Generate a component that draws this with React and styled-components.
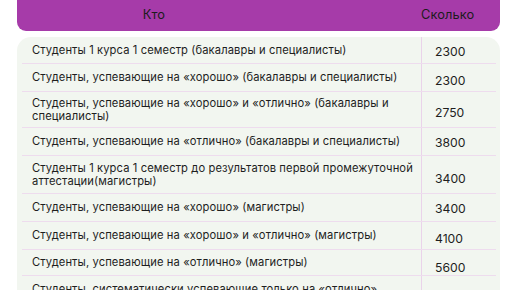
import React from 'react';
import styled, { createGlobalStyle } from 'styled-components';

const GlobalStyle = createGlobalStyle`
  body {
    margin: 0;
    background: #ffffff;
    font-family: Inter, "Open Sans", sans-serif;
    color: #1e1e1e;
  }
`;

const Page = styled.div`
  width: 516px;
  height: 290px;
  overflow: hidden;
  padding: 0 16px 0 17px;
  box-sizing: border-box;
`;

const Header = styled.div`
  display: grid;
  grid-template-columns: 274px 130px 1fr;
  align-items: center;
  height: 31px;
  background: #a63ba9;
  border-radius: 0 0 9px 9px;
  font-size: 12.8px;
  letter-spacing: 0.1px;
  color: #1c1c1c;
`;

const HeadCell = styled.div`
  text-align: ${(p) => p.$align || 'left'};
  padding-bottom: 2px;
`;

const Card = styled.div`
  margin-top: 6px;
  background: #f2f6f0;
  border-radius: 14px;
  padding: 0 4px 0 5px;
`;

const Row = styled.div`
  display: grid;
  grid-template-columns: 399px 1fr;
  height: ${(p) => p.$h}px;
  border-bottom: 1px solid #eedcee;
  box-sizing: border-box;
`;

const Who = styled.div`
  display: flex;
  align-items: center;
  padding: 0 3px 0 10px;
  font-size: 11.2px;
  letter-spacing: 0.1px;
  line-height: 13px;
`;

const Amount = styled.div`
  display: flex;
  align-items: center;
  padding: ${(p) => p.$shift || 0}px 0 0 13px;
  border-left: 1px solid #ead3ea;
  font-size: 12.2px;
`;

const rows = [
  { h: 27, who: 'Студенты 1 курса 1 семестр (бакалавры и специалисты)', sum: '2300', shift: 2 },
  { h: 28, who: 'Студенты, успевающие на «хорошо» (бакалавры и специалисты)', sum: '2300', shift: 6 },
  { h: 36, who: 'Студенты, успевающие на «хорошо» и «отлично» (бакалавры и специалисты)', sum: '2750', shift: 5 },
  { h: 28, who: 'Студенты, успевающие на «отлично» (бакалавры и специалисты)', sum: '3800', shift: 2 },
  { h: 38, who: 'Студенты 1 курса 1 семестр до результатов первой промежуточной аттестации(магистры)', sum: '3400', shift: 8 },
  { h: 28, who: 'Студенты, успевающие на «хорошо» (магистры)', sum: '3400', shift: 2 },
  { h: 28, who: 'Студенты, успевающие на «хорошо» и «отлично» (магистры)', sum: '4100', shift: 6 },
  { h: 26, who: 'Студенты, успевающие на «отлично» (магистры)', sum: '5600', shift: 9 },
  { h: 40, who: 'Студенты, систематически успевающие только на «отлично» (магистры)', sum: '' },
];

const App = () => {
  return (
    <Page>
      <GlobalStyle />
      <Header>
        <HeadCell $align="center">Кто</HeadCell>
        <div />
        <HeadCell>Сколько</HeadCell>
      </Header>
      <Card>
        {rows.map((r, i) => (
          <Row key={i} $h={r.h}>
            <Who>{r.who}</Who>
            <Amount $shift={r.shift}>{r.sum}</Amount>
          </Row>
        ))}
      </Card>
    </Page>
  );
};

export default App;
